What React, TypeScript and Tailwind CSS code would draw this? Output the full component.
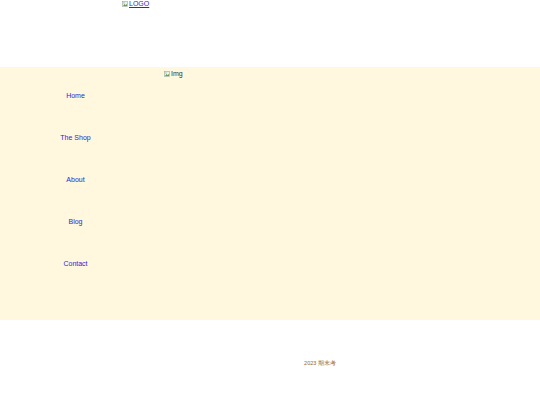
const links = ["Home", "The Shop", "About", "Blog", "Contact"];

function Broken({ label, underline }: { label: string; underline?: boolean }) {
  return (
    <span className="inline-flex items-center gap-[1px]">
      <svg width="6" height="6" viewBox="0 0 6 6" className="shrink-0">
        <rect x="0.5" y="0.5" width="5" height="5" fill="#eef3ea" stroke="#9aa79a" strokeWidth="0.6" />
        <path d="M1 5 L2.6 3 L3.8 4.2 L5 2.8 L5 5 Z" fill="#5fa24b" />
        <circle cx="2" cy="1.9" r="0.6" fill="#6ca0d8" />
      </svg>
      <span className={underline ? "underline" : ""}>{label}</span>
    </span>
  );
}

export default function App() {
  return (
    <div className="min-h-[405px] bg-white font-['Liberation_Sans',Arial,sans-serif]">
      {/* Header */}
      <header className="flex h-[67px] items-start pl-[122px]">
        <a href="#" className="block text-[7px] leading-[8px] text-[#2828d8]">
          <Broken label="LOGO" underline />
        </a>
      </header>

      {/* Main */}
      <main className="flex h-[253px] bg-[#fff7de]">
        <nav className="w-[151px] pt-[8px]">
          <ul className="flex flex-col">
            {links.map((l) => (
              <li key={l} className="flex h-[42px] items-center justify-center">
                <a href="#" className="text-[7px] text-[#2828d8]">
                  {l}
                </a>
              </li>
            ))}
          </ul>
        </nav>
        <div className="pl-[13px] pt-[3px] text-[7px] leading-[8px] text-[#333]">
          <Broken label="Img" />
        </div>
      </main>

      {/* Footer */}
      <footer className="pl-[100px] pt-[39px] text-center text-[5.5px] text-[#8b6a3e]">
        2023 期末考
      </footer>
    </div>
  );
}
